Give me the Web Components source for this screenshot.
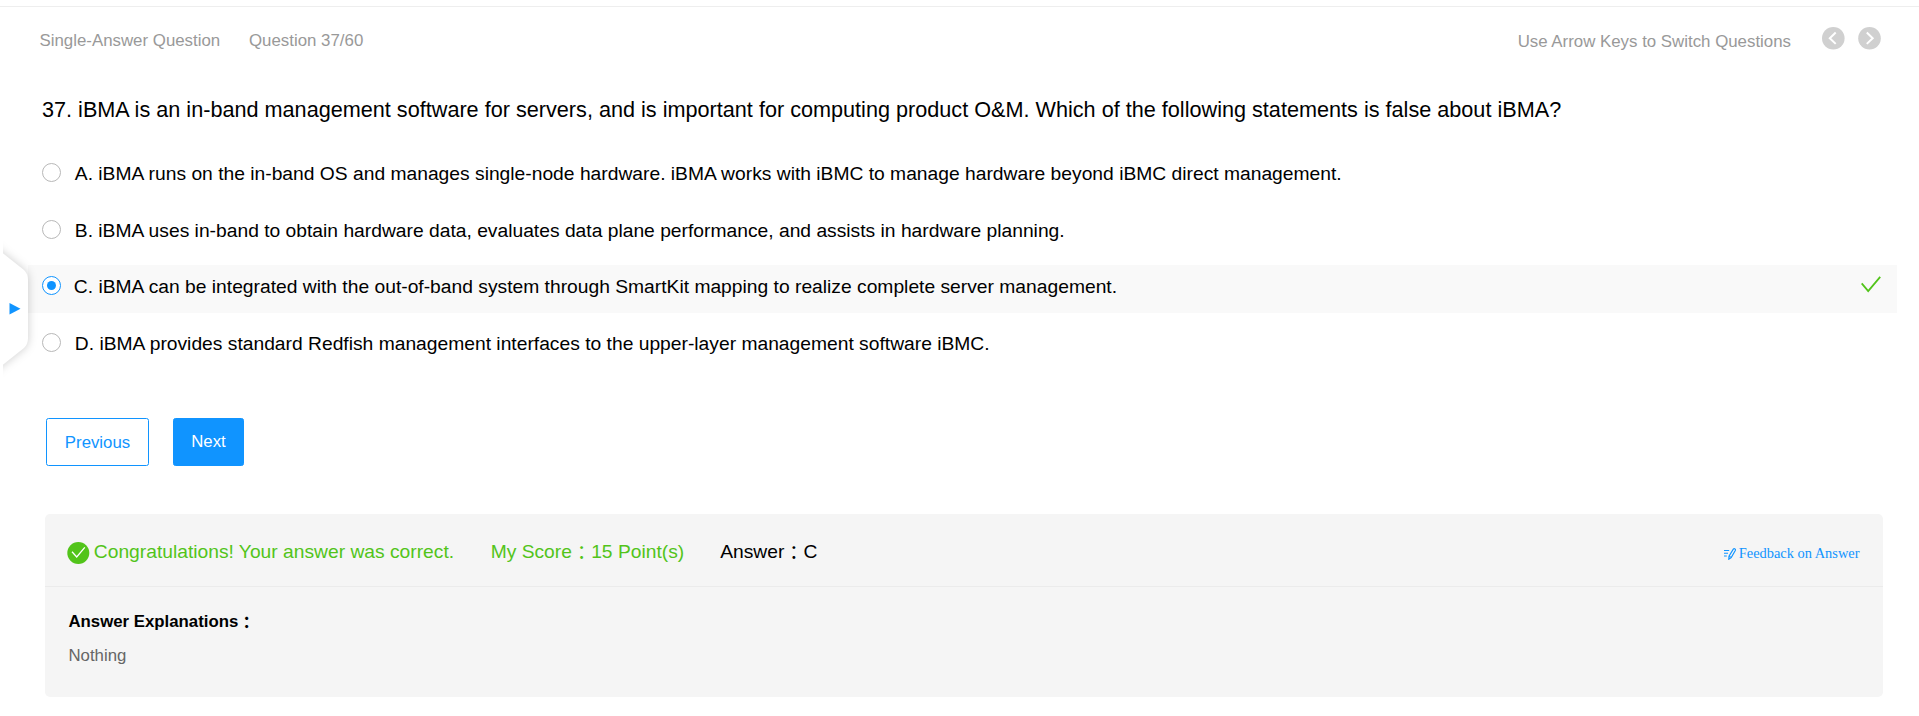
<!DOCTYPE html>
<html lang="en"><head><meta charset="utf-8"><title>Exam</title>
<style>body{margin:0;background:#fff;font-family:"Liberation Sans","Noto Sans CJK JP",sans-serif;color:#000}
.colon{vertical-align:-1.5px;line-height:0}</style></head>
<body>
<exam-page>
 <exam-header slot="header"><span slot="kind">Single-Answer Question</span><span slot="index">Question 37/60</span><span slot="hint">Use Arrow Keys to Switch Questions</span></exam-header>
 <exam-title>37. iBMA is an in-band management software for servers, and is important for computing product O&amp;M. Which of the following statements is false about iBMA?</exam-title>
 <exam-option>A. iBMA runs on the in-band OS and manages single-node hardware. iBMA works with iBMC to manage hardware beyond iBMC direct management.</exam-option>
 <exam-option style="margin-top:9px">B. iBMA uses in-band to obtain hardware data, evaluates data plane performance, and assists in hardware planning.</exam-option>
 <exam-option checked style="margin-top:8px">C. iBMA can be integrated with the out-of-band system through SmartKit mapping to realize complete server management.</exam-option>
 <exam-option style="margin-top:9px">D. iBMA provides standard Redfish management interfaces to the upper-layer management software iBMC.</exam-option>
 <exam-actions><exam-button>Previous</exam-button><exam-button primary>Next</exam-button></exam-actions>
 <exam-result lang="ja"><span slot="message">Congratulations! Your answer was correct.</span><span slot="score">My Score<span class="colon">：</span>15 Point(s)</span><span slot="answer">Answer<span class="colon">：</span>C</span><span slot="feedback">Feedback on Answer</span><span slot="heading">Answer Explanations<span class="colon">：</span></span><span slot="body">Nothing</span></exam-result>
 <exam-drawer slot="drawer"></exam-drawer>
</exam-page>
<script>
const define=(name,html)=>customElements.define(name,class extends HTMLElement{
 constructor(){super();this.attachShadow({mode:'open'}).innerHTML=html}
});
define('exam-page',`<style>:host{display:block;position:relative;height:716px;overflow:hidden;padding-top:6px;box-sizing:border-box}</style><slot name="header"></slot><main><slot></slot></main><slot name="drawer"></slot>`);
define('exam-header',`<style>:host{display:flex;border-top:1px solid #eee;height:89px;box-sizing:border-box;padding:23px 38px 0 39.5px;font-size:16.85px;line-height:22px;color:#999}
.l{display:flex;gap:28.8px;flex:1}.h{padding-top:1px}.n{display:flex;gap:13px;margin:-3px 0 0 31px}svg{display:block;width:23px;height:23px}</style>
<div class="l"><slot name="kind"></slot><slot name="index"></slot></div><div class="h"><slot name="hint"></slot></div>
<div class="n"><svg viewBox="0 0 23 23"><circle cx="11.3" cy="11.3" r="11.3" fill="#d0d0d0"/><path d="M13.7 5.5 7.8 11.2 13.7 16.9" fill="none" stroke="#fff" stroke-width="2"/></svg>
<svg viewBox="0 0 23 23"><circle cx="11.5" cy="11.3" r="11.3" fill="#d0d0d0"/><path d="M8.8 5.5 14.7 11.2 8.8 16.9" fill="none" stroke="#fff" stroke-width="2"/></svg></div>`);
define('exam-title',`<style>:host{display:block;height:57px;padding-left:42px;font-size:21.653px;line-height:29px;white-space:nowrap}</style><slot></slot>`);
define('exam-option',`<style>:host{display:flex;box-sizing:border-box;height:48px;margin:0 22px 0 28px;padding:0 16px 0 14px;font-size:19.26px;line-height:43px;white-space:nowrap}
:host([checked]){background:#f9f9f9}
i{box-sizing:border-box;width:19px;height:19px;margin:11px 13.8px 0 0;border:1px solid #b8b8b8;border-radius:50%;background:#fff;display:grid;place-items:center}
:host([checked]) i{border-color:#1094ff;margin-right:12.8px}:host([checked]) i::after{content:"";width:9px;height:9px;border-radius:50%;background:#1094ff}
.t{flex:1}svg{display:none;width:20px;height:17px;margin-top:11px}:host([checked]) svg{display:block}</style>
<i></i><div class="t"><slot></slot></div><svg viewBox="0 0 20 17"><path d="M.7 7.4 7.2 15 19.2.8" fill="none" stroke="#52c41a" stroke-width="1.8"/></svg>`);
define('exam-actions',`<style>:host{display:flex;gap:24px;margin:48px 0 48px 46px}</style><slot></slot>`);
define('exam-button',`<style>:host{box-sizing:border-box;width:103px;height:48px;border:1px solid #1094ff;border-radius:2.5px;color:#1094ff;font-size:16.8px;line-height:47px;text-align:center}
:host([primary]){width:71px;background:#1094ff;color:#fff;line-height:45px}</style><slot></slot>`);
define('exam-result',`<style>:host{display:block;box-sizing:border-box;height:183px;margin:0 36px 0 45px;border-radius:5px;background:#f5f5f5}
.top{display:flex;height:72px;border-bottom:1px solid #ebebeb;padding:0 23.5px 0 22px;font-size:19.24px;line-height:75px}
.g{color:#52c41a}.c{width:23px;height:22px;margin:28px 3.8px 0 0}.s{margin-left:36.6px}.a{margin-left:36px;flex:1}
.f{display:flex;font:14.4px/78px "Liberation Serif",serif;color:#1094ff}.f svg{width:12px;height:12px;margin:34px 3px 0 0}
.b{padding:20px 23.5px;font-size:16.8px;line-height:30px}.b div+div{color:#666;margin-top:4px}</style>
<div class="top"><svg class="c" viewBox="0 0 23 22"><circle cx="11.3" cy="11" r="11" fill="#52c41a"/><path d="M5 9.8 9.7 15 17.8 5.4" fill="none" stroke="#fff" stroke-width="1.3"/></svg>
<div class="g"><slot name="message"></slot></div><div class="g s"><slot name="score"></slot></div><div class="a"><slot name="answer"></slot></div>
<div class="f"><svg viewBox="0 0 12 12" fill="none" stroke="#1094ff" stroke-width="1.15"><path d="M0 2.5H5.2M0 5.2H4M0 8H2.8M4.8 11.2 5 8.2 9.3 1.2Q10 .3 11 .9 11.8 1.5 11.3 2.5L7.2 9.5ZM5 8.2 7.2 9.5"/></svg><slot name="feedback"></slot></div></div>
<div class="b"><div><b><slot name="heading"></slot></b></div><div><slot name="body"></slot></div></div>`);
define('exam-drawer',`<style>:host{position:absolute;left:0;top:240px;width:50px;height:140px;clip-path:inset(0 0 0 3px)}svg{display:block;overflow:visible;filter:drop-shadow(0 0 5px rgba(0,0,0,.2))}</style>
<svg width="50" height="140" viewBox="0 0 50 140"><path d="M-10 3 24 30Q28 34 28 40V98Q28 104 24 108L-10 135Z" fill="#fff"/><path d="M9.5 63V74.5L20.5 68.7Z" fill="#1094ff"/></svg>`);
</script></body></html>
